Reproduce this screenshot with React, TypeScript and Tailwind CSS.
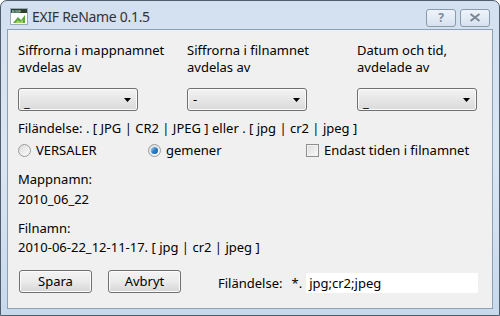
const font = { fontFamily: '"Noto Sans", "Open Sans", sans-serif' };

function Combo({ value, low }: { value: string; low?: boolean }) {
  return (
    <div className="relative flex h-[23px] w-[120px] items-center rounded-[3px] border border-[#707070] bg-gradient-to-b from-[#f3f3f3] to-[#dadada] shadow-[inset_0_0_0_1px_#fbfbfb]">
      <span className={low ? "absolute bottom-[1px] left-[5px] text-[13px] leading-none" : "ml-[5px] text-[13px] leading-none"}>
        {value}
      </span>
      <svg className="absolute right-[6px] top-[9px]" width="7" height="4" viewBox="0 0 7 4">
        <path d="M0 0h7L3.5 4z" fill="#000" />
      </svg>
    </div>
  );
}

function Radio({ checked }: { checked?: boolean }) {
  return (
    <span className="flex h-[13px] w-[13px] items-center justify-center rounded-full border border-[#9a9b9b] bg-gradient-to-br from-[#dcdcdc] to-[#fbfbfb]">
      {checked && (
        <span className="h-[7px] w-[7px] rounded-full bg-gradient-to-br from-[#a9d6f5] via-[#2a7fc4] to-[#1a5d9c]" />
      )}
    </span>
  );
}

function Button({ label }: { label: string }) {
  return (
    <button
      type="button"
      className="flex h-[23px] w-[73px] items-center justify-center rounded-[3px] border border-[#707070] bg-gradient-to-b from-[#f3f3f3] via-[#ebebeb] to-[#d6d6d6] text-[13px] leading-none text-black shadow-[inset_0_0_0_1px_#fcfcfc]"
    >
      {label}
    </button>
  );
}

export default function App() {
  return (
    <div
      className="flex h-[316px] w-[500px] flex-col overflow-hidden rounded-t-[7px] border border-[#4f5d6d] bg-gradient-to-b from-[#d3e0ef] via-[#dbe6f3] to-[#c8d9ec] text-black"
      style={font}
    >
      <div className="flex h-[28px] shrink-0 items-center pl-[9px] pr-[9px]">
        <svg width="18" height="17" viewBox="0 0 18 17" className="mt-[2px]">
          <rect x="0.5" y="0.5" width="17" height="16" fill="#fff" stroke="#9aa8b8" />
          <rect x="1" y="1" width="16" height="4" fill="#2f3f2f" />
          <text x="2" y="4.5" fontSize="4" fill="#cfe" fontFamily="Liberation Sans">EXIF</text>
          <path d="M3 15l5-6 3 3 4-5v8z" fill="#5aa33a" />
          <path d="M5 15l3-3 2 2 3-3v4z" fill="#9fd06a" />
        </svg>
        <span className="ml-[4px] mt-[3px] text-[14px] tracking-[-0.3px] text-[#333]">EXIF ReName 0.1.5</span>
        <div className="ml-auto mt-[5px] flex gap-[4px]">
          <div className="flex h-[18px] w-[30px] items-center justify-center rounded-[3px] border border-[#8a99ab] bg-gradient-to-b from-[#eef3f9] to-[#d7e2ef] text-[12px] font-bold leading-none text-[#7d8a99]">
            ?
          </div>
          <div className="flex h-[18px] w-[30px] items-center justify-center rounded-[3px] border border-[#8a99ab] bg-gradient-to-b from-[#eef3f9] to-[#d7e2ef]">
            <svg width="12" height="9" viewBox="0 0 12 9">
              <path d="M1.5 1l9 7M10.5 1l-9 7" stroke="#7d8a99" strokeWidth="2.2" fill="none" />
            </svg>
          </div>
        </div>
      </div>
      <div className="mx-[6px] mb-[6px] flex-1 border border-[#8ca0b8] bg-[#f0f0f0] pl-[10px] pt-[12px] text-[13px] leading-[17px]">
        <div className="flex">
          <div className="w-[169px]">
            <div>Siffrorna i mappnamnet</div>
            <div>avdelas av</div>
            <div className="mt-[12px]">
              <Combo value="_" low />
            </div>
          </div>
          <div className="w-[170px]">
            <div>Siffrorna i filnamnet</div>
            <div>avdelas av</div>
            <div className="mt-[12px]">
              <Combo value="-" />
            </div>
          </div>
          <div>
            <div>Datum och tid,</div>
            <div>avdelade av</div>
            <div className="mt-[12px]">
              <Combo value="_" low />
            </div>
          </div>
        </div>
        <div className="mt-[9px]">Filändelse: . [ JPG | CR2 | JPEG ] eller . [ jpg | cr2 | jpeg ]</div>
        <div className="mt-[5px] flex items-center">
          <div className="flex w-[130px] items-center gap-[5px]">
            <Radio />
            <span>VERSALER</span>
          </div>
          <div className="flex w-[158px] items-center gap-[5px]">
            <Radio checked />
            <span>gemener</span>
          </div>
          <div className="flex items-center gap-[5px]">
            <span className="h-[13px] w-[13px] border border-[#8e8f8f] bg-gradient-to-br from-[#dcdcdc] to-[#fbfbfb] shadow-[inset_0_0_0_1px_#f4f4f4]" />
            <span>Endast tiden i filnamnet</span>
          </div>
        </div>
        <div className="mt-[12px]">Mappnamn:</div>
        <div className="mt-[3px]">2010_06_22</div>
        <div className="mt-[12px]">Filnamn:</div>
        <div className="mt-[2px]">2010-06-22_12-11-17. [ jpg | cr2 | jpeg ]</div>
        <div className="mt-[13px] flex items-center">
          <div className="ml-[1px] flex gap-[16px]">
            <Button label="Spara" />
            <Button label="Avbryt" />
          </div>
          <span className="ml-[37px] mt-[4px]">Filändelse:</span>
          <span className="ml-[9px] mt-[4px]">*.</span>
          <div className="ml-[4px] mt-[4px] flex h-[20px] w-[172px] items-center bg-white pl-[3px]">jpg;cr2;jpeg</div>
        </div>
      </div>
    </div>
  );
}
